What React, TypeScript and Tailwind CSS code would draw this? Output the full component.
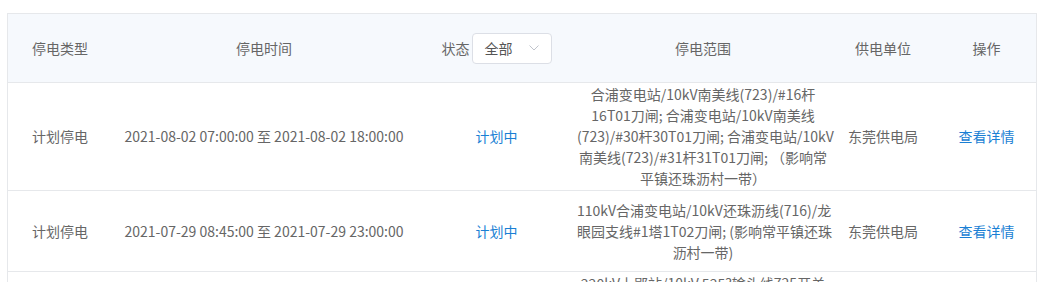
import React from 'react';

interface OutageRow {
  type: string;
  time: string;
  status: string;
  range: string[];
  unit: string;
}

const rows: OutageRow[] = [
  {
    type: '计划停电',
    time: '2021-08-02 07:00:00 至 2021-08-02 18:00:00',
    status: '计划中',
    range: [
      '合浦变电站/10kV南美线(723)/#16杆',
      '16T01刀闸; 合浦变电站/10kV南美线',
      '(723)/#30杆30T01刀闸; 合浦变电站/10kV',
      '南美线(723)/#31杆31T01刀闸; （影响常',
      '平镇还珠沥村一带）',
    ],
    unit: '东莞供电局',
  },
  {
    type: '计划停电',
    time: '2021-07-29 08:45:00 至 2021-07-29 23:00:00',
    status: '计划中',
    range: ['110kV合浦变电站/10kV还珠沥线(716)/龙', '眼园支线#1塔1T02刀闸; (影响常平镇还珠', '沥村一带)'],
    unit: '东莞供电局',
  },
  {
    type: '计划停电',
    time: '2021-07-28 07:30:00 至 2021-07-28 19:00:00',
    status: '计划中',
    range: [
      '220kV上郢站/10kV 525?输头线725开关',
      '至#12杆; 合浦变电站/10kV南美线(723)',
      '/#8杆8T01刀闸; （影响常平镇还珠沥',
      '村一带）',
    ],
    unit: '东莞供电局',
  },
];

const grid = 'grid grid-cols-[104px_304px_161px_252px_108px_99px]';

function ChevronDown() {
  return (
    <svg width="10" height="6" viewBox="0 0 10 6" fill="none">
      <path d="M0.5 0.5 L5 5 L9.5 0.5" stroke="#c0c4cc" strokeWidth="1" />
    </svg>
  );
}

export default function App() {
  return (
    <div
      className="w-[1042px] h-[282px] overflow-hidden bg-white pl-[7px] pt-[13px] text-[14px] text-[#666]"
      style={{ fontFamily: '"Noto Sans CJK SC", "Microsoft YaHei", sans-serif' }}
    >
      <div className="w-[1030px] border border-[#e6e8eb]">
        <div className={`${grid} h-[69px] bg-[#f6f9fd] border-b border-[#e6e8eb] items-center text-center`}>
          <div>停电类型</div>
          <div>停电时间</div>
          <div className="flex items-center justify-center gap-[2px]">
            <span>状态</span>
            <div className="flex items-center justify-between w-[80px] h-[31px] bg-white border border-[#dcdfe6] rounded-[4px] pl-[12px] pr-[12px]">
              <span className="text-[#555]">全部</span>
              <ChevronDown />
            </div>
          </div>
          <div>停电范围</div>
          <div>供电单位</div>
          <div>操作</div>
        </div>
        {rows.map((row, index) => (
          <div
            key={index}
            className={`${grid} min-h-[81px] py-px border-b border-[#e6e8eb] items-center text-center`}
          >
            <div>{row.type}</div>
            <div>{row.time}</div>
            <div className="text-[#1a7fd4]">{row.status}</div>
            <div className="leading-[21px] whitespace-nowrap">
              {row.range.map((line, i) => (
                <div key={i}>{line}</div>
              ))}
            </div>
            <div>{row.unit}</div>
            <div className="text-[#1a7fd4]">查看详情</div>
          </div>
        ))}
      </div>
    </div>
  );
}
